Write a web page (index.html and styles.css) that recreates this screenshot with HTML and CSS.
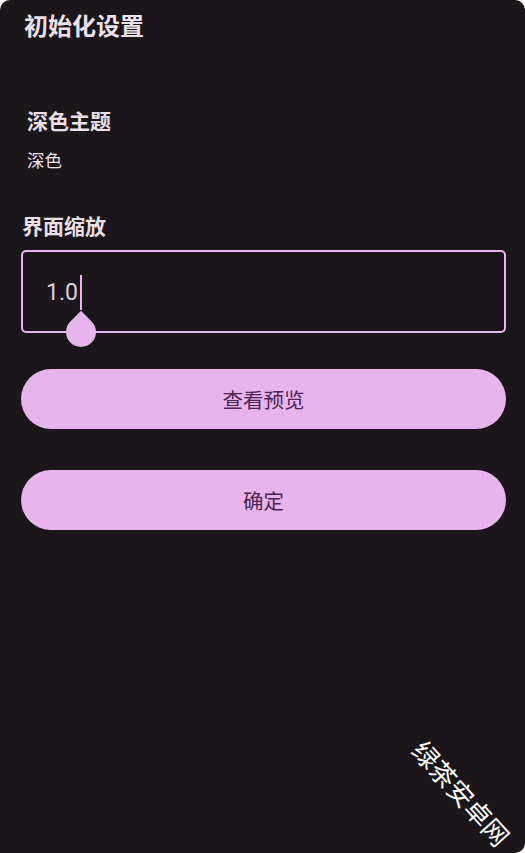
FILE: index.html
```html
<!DOCTYPE html>
<html lang="zh-CN">
<head>
  <meta charset="UTF-8">
  <meta name="viewport" content="width=device-width, initial-scale=1.0">
  <title>初始化设置</title>
  <link rel="stylesheet" href="styles.css">
</head>
<body>

  <div class="setup-screen">
    <h1 class="setup-title">初始化设置</h1>

    <div class="theme-item">
      <div class="theme-label">深色主题</div>
      <div class="theme-value">深色</div>
    </div>

    <div class="scale-label">界面缩放</div>
    <div class="scale-field">
      <span class="scale-text">1.0</span><span class="caret"><span class="caret-handle"></span></span>
    </div>

    <button class="pill-button preview-button">查看预览</button>
    <button class="pill-button confirm-button">确定</button>

    <div class="watermark">绿茶安卓网</div>
  </div>

</body>
</html>
```

FILE: styles.css
```css
body {
  margin: 0;
  padding: 0;
  background-color: #ffffff;
  font-family: "Noto Sans CJK SC", Roboto, sans-serif;
}
.setup-screen {
  position: relative;
  box-sizing: border-box;
  width: 525px;
  height: 853px;
  padding: 0 19px 0 21px;
  background-color: #1a161a;
  border-radius: 10px 10px 10px 0;
  overflow: hidden;
}
.setup-title {
  margin: 0;
  padding: 8px 0 0 3px;
  font-size: 24px;
  line-height: 34px;
  font-weight: 700;
  color: #ebe0ea;
}
.theme-item {
  padding: 62px 0 0 6px;
}
.theme-label {
  font-size: 21px;
  line-height: 32px;
  font-weight: 700;
  color: #ebe0ea;
}
.theme-value {
  margin-top: 11px;
  font-size: 17.5px;
  line-height: 26px;
  color: #ebe0ea;
}
.scale-label {
  margin-top: 36px;
  padding-left: 1px;
  font-size: 21px;
  line-height: 32px;
  font-weight: 700;
  color: #ebe0ea;
}
.scale-field {
  display: flex;
  align-items: center;
  box-sizing: border-box;
  height: 83px;
  margin-top: 9px;
  padding: 2px 0 0 23px;
  border: 2px solid #e9b6ee;
  border-radius: 5px;
}
.scale-text {
  font-family: Roboto, "Noto Sans CJK SC", sans-serif;
  font-size: 23px;
  color: #d8d0d8;
}
.caret {
  position: relative;
  display: inline-block;
  width: 2px;
  height: 35px;
  margin-left: 2px;
  background-color: #e7b4ec;
}
.caret-handle {
  position: absolute;
  left: -14px;
  top: 42px;
  width: 30px;
  height: 30px;
  background-color: #e7b4ec;
  border-radius: 0 50% 50% 50%;
  transform: rotate(45deg);
}
.pill-button {
  display: block;
  width: 100%;
  height: 60px;
  padding: 0;
  border: none;
  border-radius: 30px;
  background-color: #e8b4ec;
  color: #4c2552;
  font-family: "Noto Sans CJK SC", sans-serif;
  font-size: 20.5px;
}
.preview-button {
  margin-top: 36px;
}
.confirm-button {
  margin-top: 41px;
}
.watermark {
  position: absolute;
  left: 397px;
  top: 774px;
  font-size: 26px;
  color: #ffffff;
  transform: rotate(48deg);
  white-space: nowrap;
}
```
